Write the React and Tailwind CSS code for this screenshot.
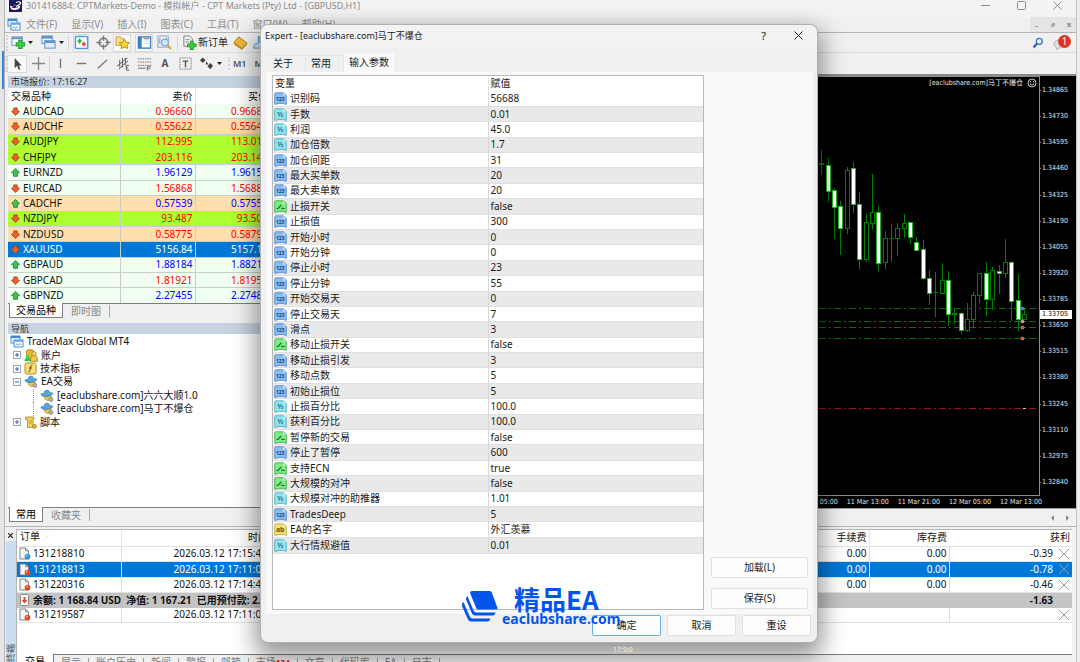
import React, { useState } from "react";
import clsx from "clsx";

const quotes = [
  ["AUDCAD", "0.96660", "0.96688", "down", "mint"],
  ["AUDCHF", "0.55622", "0.55642", "down", "peach"],
  ["AUDJPY", "112.995", "113.017", "down", "lime"],
  ["CHFJPY", "203.116", "203.145", "down", "lime"],
  ["EURNZD", "1.96129", "1.96155", "up", "mint"],
  ["EURCAD", "1.56868", "1.56887", "down", "mint"],
  ["CADCHF", "0.57539", "0.57555", "up", "peach"],
  ["NZDJPY", "93.487", "93.501", "down", "lime"],
  ["NZDUSD", "0.58775", "0.58791", "down", "peach"],
  ["XAUUSD", "5156.84", "5157.12", "down", "blue"],
  ["GBPAUD", "1.88184", "1.88213", "up", "mint"],
  ["GBPCAD", "1.81921", "1.81957", "down", "mint"],
  ["GBPNZD", "2.27455", "2.27484", "up", "mint"],
];

const rowColor = {
  mint: "bg-[#f0fff0]",
  peach: "bg-[#ffdead]",
  lime: "bg-[#adff2f]",
  blue: "bg-[#0078d7] text-white",
};

const params = [
  ["int", "识别码", "56688"],
  ["dbl", "手数", "0.01"],
  ["dbl", "利润", "45.0"],
  ["dbl", "加仓倍数", "1.7"],
  ["int", "加仓间距", "31"],
  ["int", "最大买单数", "20"],
  ["int", "最大卖单数", "20"],
  ["bool", "止损开关", "false"],
  ["int", "止损值", "300"],
  ["int", "开始小时", "0"],
  ["int", "开始分钟", "0"],
  ["int", "停止小时", "23"],
  ["int", "停止分钟", "55"],
  ["int", "开始交易天", "0"],
  ["int", "停止交易天", "7"],
  ["int", "滑点", "3"],
  ["bool", "移动止损开关", "false"],
  ["int", "移动止损引发", "3"],
  ["int", "移动点数", "5"],
  ["int", "初始止损位", "5"],
  ["dbl", "止损百分比", "100.0"],
  ["dbl", "获利百分比", "100.0"],
  ["bool", "暂停新的交易", "false"],
  ["int", "停止了暂停", "600"],
  ["bool", "支持ECN", "true"],
  ["bool", "大规模的对冲", "false"],
  ["dbl", "大规模对冲的助推器", "1.01"],
  ["int", "TradesDeep", "5"],
  ["str", "EA的名字", "外汇羡慕"],
  ["dbl", "大行情规避值", "0.01"],
];

// x, high, low, body top, body bottom, filled
const candles = [
  [2, 73, 98, 86, 87, 0],
  [9, 81, 125, 88, 114, 1],
  [15, 111, 162, 113, 130, 1],
  [21, 124, 178, 129, 151, 1],
  [28, 90, 157, 93, 151, 0],
  [34, 85, 136, 91, 127, 1],
  [40, 115, 192, 127, 182, 1],
  [47, 137, 185, 145, 182, 0],
  [53, 97, 152, 135, 146, 0],
  [59, 129, 194, 135, 186, 1],
  [66, 154, 192, 161, 185, 0],
  [72, 147, 185, 161, 161, 0],
  [78, 146, 179, 151, 161, 0],
  [85, 137, 161, 146, 151, 0],
  [91, 145, 167, 145, 160, 1],
  [97, 160, 174, 165, 173, 1],
  [104, 163, 203, 172, 201, 1],
  [110, 193, 228, 201, 216, 1],
  [116, 195, 240, 215, 215, 0],
  [123, 186, 217, 203, 216, 0],
  [129, 194, 249, 203, 237, 1],
  [135, 231, 247, 236, 237, 0],
  [142, 235, 257, 236, 253, 1],
  [148, 226, 255, 242, 253, 0],
  [154, 215, 251, 218, 242, 0],
  [160, 196, 226, 196, 218, 0],
  [167, 185, 239, 196, 222, 1],
  [173, 190, 233, 193, 222, 0],
  [180, 188, 217, 194, 196, 1],
  [186, 162, 201, 185, 196, 0],
  [192, 184, 244, 185, 224, 1],
  [199, 197, 254, 223, 242, 1],
  [205, 231, 243, 237, 242, 0],
];

const prices = [
  "1.34865", "1.34730", "1.34595", "1.34460", "1.34325", "1.34190", "1.34055", "1.33920",
  "1.33785", "1.33650", "1.33515", "1.33380", "1.33245", "1.33110", "1.32975", "1.32840",
];

const times = ["11 Mar 05:00", "11 Mar 13:00", "11 Mar 21:00", "12 Mar 05:00", "12 Mar 13:00"];

const orders = [
  ["131218810", "2026.03.12 17:15:43", "-0.39", "buy"],
  ["131218813", "2026.03.12 17:11:01", "-0.78", "sell"],
  ["131220316", "2026.03.12 17:14:41", "-0.46", "sell"],
];

/* ---------- icons ---------- */

const Arrow = ({ dir }) => (
  <svg width="9" height="9" viewBox="0 0 9 9" className="shrink-0">
    {dir === "up" ? (
      <path d="M4.500 .5 8.500 4.500 6.500 5V8.300H2.500V5L.5 4.500z" fill="#3fc255" stroke="#167d30" strokeWidth=".8" />
    ) : (
      <path d="M4.500 8.500.5 4.500 2.800 3V.9H6.200V3L8.500 4.500z" fill="#f0602f" stroke="#a83a18" strokeWidth=".8" />
    )}
  </svg>
);

const typeStyle = {
  int: ["#8dbdf0", "#4a83c4", "#123f80", "123"],
  dbl: ["#93e3ee", "#45a9ba", "#14707f", "½"],
  bool: ["#7fea86", "#35a845", "#10702a", ""],
  str: ["#f0e27c", "#b9a233", "#6a5708", "ab"],
};

const TypeIcon = ({ type }) => {
  const [fill, stroke, ink, label] = typeStyle[type];
  return (
    <svg width="13" height="13" viewBox="0 0 13 13" className="shrink-0">
      <path
        d="M1.500 .8H9.200L12.300 3.300V12.200H10.800L9.800 11.400H4L3 12.200H.7V1.600z"
        fill={fill}
        stroke={stroke}
        strokeWidth=".8"
      />
      <path d="M9 .9V3.500H12.200z" fill="#fff" fillOpacity=".6" />
      {type === "bool" ? (
        <path d="M2.500 8.500H4L7.300 4.800M8 7.500V8.500H10.800" fill="none" stroke={ink} strokeWidth="1.200" />
      ) : (
        <text
          x="6.200"
          y="8.800"
          textAnchor="middle"
          fontSize={type === "int" ? 5 : 7}
          fontWeight="700"
          fontFamily="Noto Sans"
          fill={ink}
        >
          {label}
        </text>
      )}
    </svg>
  );
};

const DocIcon = ({ color }) => (
  <svg width="12" height="13" viewBox="0 0 12 13" className="shrink-0">
    <path d="M1 1H6.500L9.500 3.800V12H1z" fill="#f7f7f7" stroke="#777" strokeWidth=".9" />
    <path d="M6.500 1V3.800H9.500" fill="none" stroke="#777" strokeWidth=".8" />
    <circle cx="8.500" cy="9.600" r="2.900" fill={color} />
    <circle cx="7.800" cy="8.700" r="1" fill="#fff" fillOpacity=".5" />
  </svg>
);

const WindowsIcon = () => (
  <svg width="14" height="13" viewBox="0 0 14 13" className="shrink-0">
    <rect x="1" y="1" width="9" height="7" fill="#e9f4ff" stroke="#4a90d0" />
    <path d="M1 2H10" stroke="#3a86cf" strokeWidth="2" />
    <rect x="4" y="5" width="9" height="7" fill="#fff" stroke="#4a90d0" />
    <path d="M4 6H13" stroke="#5aa2e2" strokeWidth="1.500" />
    <path d="M5.500 10.500 7 8.500 8.500 10.500 10 8.500 11.500 10" fill="none" stroke="#4a90d0" strokeWidth=".8" />
  </svg>
);

const HatIcon = () => (
  <svg width="14" height="13" viewBox="0 0 14 13" className="shrink-0">
    <path d="M4 7Q4.500 11.500 8 11.500T11.500 7z" fill="#e8c25a" stroke="#b08a26" strokeWidth=".6" />
    <path d="M.8 5.500Q2 7.800 7 7.300T13 4.300Q11.500 3.300 10 3.800 8.800.3 6 1.200 4 2 4 4.700 1.500 4.300.8 5.500z" fill="#55a7dc" stroke="#2d78ad" strokeWidth=".7" />
    <circle cx="11" cy="10.500" r="1.900" fill="#b6b6b6" stroke="#777" strokeWidth=".7" />
  </svg>
);

const UsersIcon = () => (
  <svg width="14" height="13" viewBox="0 0 14 13" className="shrink-0">
    <rect x="2.500" y=".8" width="7" height="9" rx="1.500" fill="#e7b92c" stroke="#9d7508" strokeWidth=".7" />
    <path d="M6.500 12.300Q6 6.500 10 6.500T13.500 12.300z" fill="#f0ca45" stroke="#9d7508" strokeWidth=".7" />
    <circle cx="10" cy="4.800" r="2.200" fill="#f3d470" stroke="#9d7508" strokeWidth=".7" />
    <path d="M.4 12.300Q.4 8.500 3.500 8.500T6.700 12.300z" fill="#41c148" />
    <circle cx="3.500" cy="7.300" r="1.900" fill="#59d25f" />
  </svg>
);

const FuncIcon = () => (
  <svg width="13" height="13" viewBox="0 0 13 13" className="shrink-0">
    <rect x="1" y="1" width="11" height="11" rx="1.500" fill="#f8df78" stroke="#b08e22" />
    <path d="M8.500 3.300Q6.800 2.800 6.500 5L5.800 9Q5.500 10 4.300 9.700M4.800 6H8" fill="none" stroke="#6e5409" />
  </svg>
);

const ScriptIcon = () => (
  <svg width="13" height="13" viewBox="0 0 13 13" className="shrink-0">
    <path d="M1.500 1H10V3.500H9V9H11.500V11.500H3.500V3.500H1.500z" fill="#f1d262" stroke="#a98920" strokeWidth=".8" />
    <path d="M5 5H8M5 7H8" stroke="#a98920" strokeWidth=".8" />
    <circle cx="10.500" cy="10.500" r="1.900" fill="#e4b832" stroke="#8b6a10" strokeWidth=".6" />
  </svg>
);

const Toggle = ({ open }) => (
  <svg width="8" height="8" viewBox="0 0 8 8" className="shrink-0">
    <rect x=".5" y=".5" width="7" height="7" fill="#fff" stroke="#a5a5a5" />
    <path d={open ? "M2 4H6" : "M2 4H6M4 2V6"} stroke="#3a5da8" />
  </svg>
);

const Caret = () => (
  <svg width="5" height="3" viewBox="0 0 5 3" className="shrink-0">
    <path d="M0 0H5L2.500 3z" fill="#222" />
  </svg>
);

const Grip = () => <span className="h-4 w-0 border-l-2 border-dotted border-gray-300" />;

const Tool = ({ label, active, className, children }) => (
  <button
    aria-label={label}
    className={clsx("flex h-[18px] items-center justify-center", active && "border border-[#dadada] bg-[#f9f9f9]", className)}
  >
    {children}
  </button>
);

const Svg16 = ({ children }) => (
  <svg width="15" height="15" viewBox="0 0 16 16" fill="none" className="shrink-0">
    {children}
  </svg>
);

/* ---------- main window bars ---------- */

const TitleBar = () => (
  <div className="flex h-[17px] items-center bg-[#f3f3f3] pb-[6px] pl-1 text-[9px] text-[#8b8b8b]">
    <svg width="13" height="12" viewBox="0 0 13 12" className="mr-1 shrink-0">
      <path d="M0 0H13V12H0z" fill="#1b1a5e" />
      <path d="M7 2.500Q10.500 1 11.500 2.500T7 6.500" fill="none" stroke="#fff" strokeWidth="1.200" />
      <path d="M2 6Q2 9.500 6 9T10.500 6" fill="none" stroke="#fff" strokeWidth="1.800" />
      <path d="M2.500 7.500 7 4.500" stroke="#d9485b" />
    </svg>
    <span className="flex-1">301416884: CPTMarkets-Demo - 模拟帐户 - CPT Markets (Pty) Ltd - [GBPUSD,H1]</span>
    <div className="flex gap-[27px] pr-[14px]">
      <button aria-label="最小化">
        <svg width="9" height="9" viewBox="0 0 9 9"><path d="M0 4.500H9" stroke="#8d8d8d" /></svg>
      </button>
      <button aria-label="最大化">
        <svg width="9" height="9" viewBox="0 0 9 9"><rect x=".5" y=".5" width="8" height="8" rx="1" fill="none" stroke="#8d8d8d" /></svg>
      </button>
      <button aria-label="关闭">
        <svg width="9" height="9" viewBox="0 0 9 9"><path d="M.5.5 8.500 8.500M8.500.5.5 8.500" stroke="#8d8d8d" /></svg>
      </button>
    </div>
  </div>
);

const MenuBar = () => (
  <div className="flex h-4 items-center border-b border-[#b5b5b5] bg-[#f0f0f0] pl-[2px] text-[#8f8f8f]">
    <WindowsIcon />
    <nav className="flex flex-1 gap-[14px] pl-[5px]">
      {["文件(F)", "显示(V)", "插入(I)", "图表(C)", "工具(T)", "窗口(W)", "帮助(H)"].map((m) => (
        <button key={m}>{m}</button>
      ))}
    </nav>
    <div className="flex h-full items-center gap-3 bg-[#e5e5e5] px-[5px]">
      <svg width="4" height="4" viewBox="0 0 4 4"><path d="M0 3.500H3" stroke="#8fa0b0" /></svg>
      <svg width="4" height="4" viewBox="0 0 4 4"><path d="M.5 1.500H2.500V3.500H.5zM1.500 .5H3.500V2.500" fill="none" stroke="#8fa0b0" /></svg>
      <svg width="4" height="4" viewBox="0 0 4 4"><path d="M0 0 4 4M4 0 0 4" stroke="#7f8f9f" strokeWidth="1.500" /></svg>
    </div>
  </div>
);

const Toolbars = () => (
  <div className="relative h-[41px] bg-[#f0f0f0] text-[#222]">
    <div className="flex h-5 items-center border-b border-[#dcdcdc] pl-[1px]">
      <Grip />
      <Tool label="新图表" className="w-5">
        <Svg16>
          <rect x="1" y="2" width="11" height="9" fill="#fff" stroke="#5b8fc4" />
          <path d="M1 3.500H12" stroke="#5b8fc4" strokeWidth="2" />
          <path d="M10 5V15M5 10H15" stroke="#1f9a2a" strokeWidth="4.500" />
          <path d="M10 6V14M6 10H14" stroke="#3fd14a" strokeWidth="2.500" />
        </Svg16>
      </Tool>
      <Caret />
      <Tool label="模板" className="ml-1 w-[22px]">
        <Svg16>
          <rect x="1" y="1" width="11" height="8" fill="#eaf4ff" stroke="#5b8fc4" />
          <path d="M1 2.500H12" stroke="#5b8fc4" strokeWidth="2.500" />
          <rect x="4" y="6" width="11" height="8" fill="#dfeefc" stroke="#5b8fc4" />
          <path d="M4 7.500H15" stroke="#5b8fc4" strokeWidth="2" />
        </Svg16>
      </Tool>
      <Caret />
      <span className="mx-1 h-4 border-l border-gray-300" />
      <Tool label="市场报价" active className="w-4">
        <Svg16>
          <rect x="1.500" y="1.500" width="13" height="13" rx="1" fill="#fff" stroke="#4d9be0" strokeWidth="1.600" />
          <path d="M6 3.500 8.500 6.500 6 9.500 3.500 6.500z" fill="#38b048" />
          <path d="M10.500 7 13 9.500 10.500 12.500 8 9.500z" fill="#e5532d" />
        </Svg16>
      </Tool>
      <Tool label="数据窗口" className="ml-1 w-5">
        <Svg16>
          <circle cx="8" cy="8" r="4.500" stroke="#777" strokeWidth="1.700" />
          <path d="M8 .5V6M8 10V15.500M.5 8H6M10 8H15.500" stroke="#777" strokeWidth="1.500" />
        </Svg16>
      </Tool>
      <Tool label="导航" active className="w-[18px]">
        <Svg16>
          <path d="M1 2H6L7 4H10V11H1z" fill="#fbe08a" stroke="#c99a25" />
          <path d="m10 4.500 1.700 3.300 3.800.5-2.700 2.500.6 3.700-3.400-1.700-3.400 1.700.6-3.700L4.500 8.300l3.800-.5z" fill="#ffd53a" stroke="#b98a10" />
        </Svg16>
      </Tool>
      <Tool label="终端" active className="ml-1 w-[18px]">
        <Svg16>
          <rect x="1.500" y="2" width="13" height="12" fill="#fff" stroke="#3d7fc4" strokeWidth="1.500" />
          <path d="M2 2H5V14H2z" fill="#3d7fc4" />
          <path d="M7 4H13" stroke="#d0452c" />
          <path d="M7 6.500H13M7 9H13" stroke="#c6dff5" />
        </Svg16>
      </Tool>
      <Tool label="策略测试" className="ml-[2px] w-[18px]">
        <Svg16>
          <rect x="1" y="1" width="11" height="12" fill="#e6eef6" stroke="#8aa5bf" />
          <path d="M3 3V9M5.500 5V11M10 3V8" stroke="#6d8eb0" />
          <circle cx="8.500" cy="8" r="3.700" fill="#cfe6fa" stroke="#6b93b8" />
          <path d="M11 11 15 15" stroke="#e0a52c" strokeWidth="2.200" />
        </Svg16>
      </Tool>
      <span className="mx-1 h-4 border-l border-gray-300" />
      <button className="flex items-center gap-px">
        <Svg16>
          <path d="M2 1H8L11 4V12H2z" fill="#f4f4f4" stroke="#777" />
          <path d="M4 5H8M4 7.500H7" stroke="#777" />
          <path d="M10.500 6V16M5.500 11H15.500" stroke="#1f9a2a" strokeWidth="4" />
          <path d="M10.500 7V15M6.500 11H14.500" stroke="#3fd14a" strokeWidth="2" />
        </Svg16>
        新订单
      </button>
      <Tool label="编辑器" className="ml-1 w-4">
        <Svg16>
          <path d="M6 2 15 8.500 9.500 14.500 1 8z" fill="#eab73a" stroke="#a87711" />
          <path d="M1 8 9.500 14.500 15 8.500V10L9.500 16 1 10z" fill="#c98f1d" />
        </Svg16>
      </Tool>
      <Tool label="自动交易" className="ml-1 w-4">
        <Svg16>
          <path d="M5 1H12V8H5z" fill="#56aee8" />
          <path d="M1 14Q0 9 5 9.500 8 6 11 9.500 16 9 15 14z" fill="#cfe7fa" stroke="#5593c9" />
        </Svg16>
      </Tool>
    </div>
    <div className="flex h-[21px] items-center text-[9px] font-semibold text-[#555]">
      <Grip />
      <Tool label="光标" active className="w-5">
        <Svg16><path d="M5 2V13L7.500 10.500 9.500 15 11 14 9.500 10H12.500z" fill="#444" /></Svg16>
      </Tool>
      <Tool label="十字线" className="ml-px w-5"><Svg16><path d="M8 1V15M1 8H15" stroke="#888" strokeWidth="1.500" /></Svg16></Tool>
      <span className="ml-px h-4 border-l border-gray-300" />
      <Tool label="垂直线" className="w-[21px]"><Svg16><path d="M8 3V13" stroke="#777" strokeWidth="1.500" /></Svg16></Tool>
      <Tool label="水平线" className="w-[21px]"><Svg16><path d="M3 8H13" stroke="#777" strokeWidth="1.500" /></Svg16></Tool>
      <Tool label="趋势线" className="w-[21px]"><Svg16><path d="M3 13 13 4" stroke="#777" strokeWidth="1.300" /></Svg16></Tool>
      <Tool label="通道" className="w-[21px]">
        <Svg16><path d="M1 11 12 2M3 14 13 5M4 4V12M7 2V12M10 2V10M14 10H11V15H14M11 12.500H13" stroke="#555" /></Svg16>
      </Tool>
      <Tool label="斐波那契" className="w-[21px]">
        <Svg16>
          <path d="M1 3H15M1 6.500H15M1 10H15" stroke="#666" strokeDasharray="1.500 1" />
          <path d="M1 13H9M11 15.500V11.500H15M11 13.500H14" stroke="#666" />
        </Svg16>
      </Tool>
      <Tool label="文字" className="w-5 text-[10px] font-bold">A</Tool>
      <Tool label="文本标签" className="w-[21px]">
        <Svg16>
          <rect x="2" y="2" width="12" height="12" stroke="#777" strokeDasharray="1.500 1" />
          <path d="M5 5.500H11M8 5.500V12" stroke="#555" strokeWidth="1.500" />
        </Svg16>
      </Tool>
      <Tool label="箭头" className="w-[21px]">
        <Svg16><path d="M4 1.500 7 4.500 4 7.500 1 4.500zM8 5.500 10 9H7zM12 7.500 15 10.500 12 14 9 11z" fill="#444" /></Svg16>
      </Tool>
      <Caret />
      <span className="ml-[6px]"><Grip /></span>
      <button className="ml-[3px]">M1</button>
      <button className="ml-2">M5</button>
      <button className="ml-2">M15</button>
    </div>
    {/* search and notifications */}
    <div className="absolute right-[5px] top-0 flex items-start gap-[9px]">
      <button aria-label="搜索" className="mt-1">
        <svg width="12" height="12" viewBox="0 0 12 12">
          <circle cx="7.300" cy="4.300" r="3" fill="#e4f0ff" stroke="#3f6fc9" strokeWidth="1.300" />
          <path d="M5 6.500 1.500 10.500" stroke="#2f5dbb" strokeWidth="2.200" />
        </svg>
      </button>
      <button aria-label="通知" className="mt-[2px] flex items-start">
        <svg width="8" height="11" viewBox="0 0 8 11" className="mt-1">
          <path d="M8 1Q1 1 1 5 1 7.500 3.500 8.500V10.500L6 9H8z" fill="#e2e2e2" stroke="#b5b5b5" />
        </svg>
        <span className="-ml-[3px] flex size-[13px] items-center justify-center rounded-full bg-[#dc3520] text-[10px] leading-[13px] text-white">1</span>
      </button>
    </div>
  </div>
);

/* ---------- left panels ---------- */

const PanelTabs = ({ tabs }) => (
  <div className="flex h-[19px] shrink-0 items-start border-t border-[#7d7d7d] pl-px text-[#8a8a8a]">
    {tabs.map((t, i) =>
      i === 0 ? (
        <button key={t} className="-mt-px h-[15px] border-x border-b border-[#7d7d7d] bg-white px-[6px] leading-[13px] text-black">{t}</button>
      ) : (
        <button key={t} className="mt-px border-r border-[#a5a5a5] px-2 leading-[12px]">{t}</button>
      )
    )}
  </div>
);

const MarketWatch = () => (
  <>
    <div className="h-3 bg-[#c5d3e2] pl-[3px] text-[9px] leading-[11px] text-[#333]">市场报价: 17:16:27</div>
    <div className="h-[215px] shrink-0 overflow-hidden bg-white">
      <table className="h-[216px] w-full table-fixed border-collapse leading-[13px]">
        <colgroup>
          <col className="w-[112px]" />
          <col className="w-[75px]" />
          <col />
        </colgroup>
        <thead>
          <tr className="h-4">
            <th className="border-r border-[#e5e5e5] p-0 pl-[3px] text-left font-normal">交易品种</th>
            <th className="border-r border-[#e5e5e5] p-0 pr-[2px] text-right font-normal">卖价</th>
            <th className="p-0 pr-[2px] text-right font-normal">买价</th>
          </tr>
        </thead>
        <tbody>
          {quotes.map(([sym, bid, ask, dir, bg]) => {
            const color = bg === "blue" ? "text-white" : dir === "up" ? "text-[#0000ff]" : "text-[#ff0000]";
            return (
              <tr key={sym} className={rowColor[bg]}>
                <td className="border-b border-r border-[#c8cfc8] p-0">
                  <span className="flex items-center gap-[3px] pl-[3px]">
                    <Arrow dir={dir} />
                    {sym}
                  </span>
                </td>
                <td className={clsx("border-b border-r border-[#c8cfc8] p-0 pr-[2px] text-right", color)}>{bid}</td>
                <td className={clsx("border-b border-[#c8cfc8] p-0 pr-[2px] text-right", color)}>{ask}</td>
              </tr>
            );
          })}
        </tbody>
      </table>
    </div>
    <PanelTabs tabs={["交易品种", "即时图"]} />
  </>
);

const Navigator = () => (
  <>
    <div className="mt-px h-[11px] bg-[#c5d3e2] pl-[3px] text-[9px] leading-[11px] text-[#333]">导航</div>
    <div className="flex-1 bg-white pt-px">
      <ul className="flex h-[94px] flex-col *:flex *:flex-1 *:items-center *:gap-[3px] *:leading-[13px]">
        <li className="pl-[2px]"><WindowsIcon />TradeMax Global MT4</li>
        <li className="pl-[5px]"><Toggle /><UsersIcon />账户</li>
        <li className="pl-[5px]"><Toggle /><FuncIcon />技术指标</li>
        <li className="pl-[5px]"><Toggle open /><HatIcon />EA交易</li>
        {["[eaclubshare.com]六六大顺1.0", "[eaclubshare.com]马丁不爆仓"].map((n) => (
          <li key={n} className="pl-[25px]">
            <span className="-mr-1 h-full w-2 border-l border-dotted border-gray-400" />
            <HatIcon />
            {n}
          </li>
        ))}
        <li className="pl-[5px]"><Toggle /><ScriptIcon />脚本</li>
      </ul>
    </div>
    <PanelTabs tabs={["常用", "收藏夹"]} />
  </>
);

/* ---------- chart ---------- */

const Chart = () => (
  <div className="flex min-w-0 flex-1 flex-col">
    <div className="flex flex-1 flex-col border-t-2 border-[#8a8a8a] bg-black font-['DejaVu_Sans_Condensed','Noto_Sans_CJK_SC',sans-serif] text-[7px] leading-[9px] text-[#e6e6e6]">
      <div className="flex h-[420px]">
        <div className="relative flex flex-1 justify-end overflow-hidden border-b border-r border-t border-[#8e8e8e]">
          <svg width="220" height="418" viewBox="0 0 220 418" className="shrink-0" shapeRendering="crispEdges">
            {[231, 244, 250, 261].map((y) => (
              <path key={y} d={`M0 ${y}.5H220`} stroke="#0b6b12" strokeDasharray="7 3 2 3" />
            ))}
            <path d="M0 331.500H220" stroke="#a80f0f" strokeDasharray="7 3 2 3" />
            <path d="M204 331.500H207" stroke="#ccc" />
            {candles.map(([x, high, low, top, bottom, filled]) => (
              <g key={x}>
                <path d={`M${x + 0.5} ${high}V${low}`} stroke="#008000" />
                <rect
                  x={x - 1.5}
                  y={top + 0.5}
                  width="4"
                  height={Math.max(bottom - top, 0.1)}
                  fill={filled ? "#fff" : "#000"}
                  stroke={filled ? "#22b522" : "#008000"}
                />
              </g>
            ))}
            {[[231, "#3b4bff"], [244, "#d99"], [250, "#f22"], [261, "#f22"]].map(([y, c]) => (
              <circle key={y} cx="203.500" cy={y + 0.5} r="1.500" fill={c} stroke="#ccc" strokeWidth=".6" shapeRendering="auto" />
            ))}
          </svg>
          <div className="absolute right-[2px] top-px flex items-center gap-1">
            [eaclubshare.com]马丁不爆仓
            <svg width="10" height="10" viewBox="0 0 10 10" fill="none" stroke="#ddd" strokeWidth=".9">
              <circle cx="5" cy="5" r="4" />
              <path d="M2.800 5.800Q5 8.500 7.200 5.800M3.500 3V4.300M6.500 3V4.300" />
            </svg>
          </div>
        </div>
        <div className="relative flex w-9 flex-col justify-between pb-[9px] pt-[10px]">
          {prices.map((p) => (
            <span key={p} className="flex items-center gap-px">
              <i className="w-px border-t border-[#8e8e8e]" />
              {p}
            </span>
          ))}
          <span className="absolute left-0 top-[234px] w-8 bg-white pl-[2px] text-black">1.33705</span>
        </div>
      </div>
      <div className="flex justify-end gap-[9px] pr-[34px] pt-[2px]">
        {times.map((t) => (
          <span key={t} className="whitespace-nowrap">{t}</span>
        ))}
      </div>
    </div>
    <div className="flex h-[18px] items-center justify-end gap-3 border-t border-[#9a9a9a] pr-[7px]">
      <svg width="3" height="6" viewBox="0 0 3 6"><path d="M3 0V6L0 3z" fill="#8a8a8a" /></svg>
      <svg width="3" height="6" viewBox="0 0 3 6"><path d="M0 0V6L3 3z" fill="#8a8a8a" /></svg>
    </div>
  </div>
);

/* ---------- terminal ---------- */

const CloseOrder = () => (
  <button aria-label="平仓" className="block">
    <svg width="12" height="12" viewBox="0 0 12 12"><path d="M1 1 11 11M11 1 1 11" stroke="#999" /></svg>
  </button>
);

const OrderRow = ({ id, time, profit, kind, selected, pending }) => (
  <tr className={clsx("border-b border-[#e2e2e2]", selected && "bg-[#0078d7] text-white")}>
    <td className="border-r border-[#dcdcdc] p-0">
      <span className="flex items-center gap-[2px] pl-[2px]">
        <DocIcon color={kind === "buy" ? "#2b94dd" : "#dd4a22"} />
        {id}
      </span>
    </td>
    <td className="p-0 pr-px text-right">{time}</td>
    <td />
    <td className={clsx("p-0 pr-[2px] text-right", !pending && "border-r border-[#dcdcdc]")}>{!pending && "0.00"}</td>
    <td className="border-r border-[#dcdcdc] p-0 pr-[2px] text-right">{!pending && "0.00"}</td>
    <td className="p-0">
      <span className="flex items-center justify-end gap-[5px] pr-[2px]">
        {profit}
        <CloseOrder />
      </span>
    </td>
  </tr>
);

const bottomTabs = ["展示", "账户历史", "新闻", "警报", "邮箱", "市场", "文章", "代码库", "EA", "日志"];

const Terminal = () => (
  <div className="flex h-[136px] shrink-0 border-t border-[#b5b5b5] bg-[#f0f0f0] pr-1 pt-[2px]">
    <div className="flex w-[11px] shrink-0 flex-col items-center">
      <button aria-label="关闭终端" className="flex h-3 items-center">
        <svg width="5" height="5" viewBox="0 0 5 5"><path d="M0 0 5 5M5 0 0 5" stroke="#222" strokeWidth="1.200" /></svg>
      </button>
      <div className="flex w-[10px] flex-1 items-end justify-center bg-[#c9dcf0]">
        <span className="rotate-180 text-[9px] leading-[10px] text-[#555] [text-orientation:sideways] [writing-mode:vertical-rl]">终端</span>
      </div>
    </div>
    <div className="flex min-w-0 flex-1 flex-col border-l border-t border-[#b5b5b5] bg-white">
      <table className="h-[93px] w-full table-fixed border-collapse leading-[13px]">
        <colgroup>
          <col className="w-[104px]" />
          <col className="w-[147px]" />
          <col />
          <col className="w-20" />
          <col className="w-20" />
          <col className="w-[123px]" />
        </colgroup>
        <thead>
          <tr className="h-4 border-b border-[#e2e2e2] *:p-0 *:font-normal">
            <th className="border-r border-[#e8e8e8] text-left"><span className="pl-[3px]">订单</span> <span className="text-[6px] text-gray-400">∕</span></th>
            <th className="text-right">时间</th>
            <th />
            <th className="border-r border-[#e8e8e8] text-right"><span className="pr-[2px]">手续费</span></th>
            <th className="text-right"><span className="pr-[2px]">库存费</span></th>
            <th className="text-right"><span className="pr-[2px]">获利</span></th>
          </tr>
        </thead>
        <tbody>
          {orders.map(([id, time, profit, kind], i) => (
            <OrderRow key={id} id={id} time={time} profit={profit} kind={kind} selected={i === 1} />
          ))}
          <tr className="bg-[#c4c4c4] font-bold">
            <td colSpan={5} className="whitespace-pre p-0">
              <span className="flex items-center gap-[2px] pl-[2px]">
                <svg width="12" height="12" viewBox="0 0 12 12" className="shrink-0">
                  <rect x="1.500" y=".5" width="8" height="11" rx="1" fill="#fff" stroke="#888" />
                  <path d="M5.500 9.500 2.500 6H4.500V3H6.500V6H8.500z" fill="#dd4a22" />
                </svg>
                {"余额: 1 168.84 USD  净值: 1 167.21  已用预付款: 2.63"}
              </span>
            </td>
            <td className="p-0 pr-[19px] text-right">-1.63</td>
          </tr>
          <OrderRow id="131219587" time="2026.03.12 17:11:02" kind="sell" pending />
        </tbody>
      </table>
      <div className="flex-1" />
      <div className="flex h-2 shrink-0 items-start border-t border-[#7d7d7d] bg-[#f0f0f0] leading-[14px] text-[#7d7d7d]">
        <button className="-mt-px border-r border-[#7d7d7d] bg-white px-2 text-black">交易</button>
        {bottomTabs.map((t) => (
          <button key={t} className="flex shrink-0 items-center">
            <span className="px-[7px]">
              {t}
              {t === "市场" && <b className="text-[8px] text-[#f00000]">134</b>}
            </span>
            <i className="h-[9px] border-l border-[#9a9a9a]" />
          </button>
        ))}
      </div>
    </div>
  </div>
);

/* ---------- expert dialog ---------- */

const DialogButton = ({ primary, className, children }) => (
  <button
    className={clsx(
      "h-[21px] rounded-[2px] border bg-[#fdfdfd] text-center leading-[18px]",
      primary ? "border-[#6cb0e6]" : "border-[#e0e0e0]",
      className
    )}
  >
    {children}
  </button>
);

const ExpertDialog = () => {
  const [tab, setTab] = useState("输入参数");

  return (
    <div
      role="dialog"
      aria-label="Expert"
      className="relative w-[558px] rounded-lg border border-[#b0b0b0] bg-[#f0f0f0] text-[#1a1a1a] shadow-[0_10px_24px_4px_rgba(0,0,0,0.42)]"
    >
      <div className="flex h-[22px] items-center justify-between rounded-t-lg bg-[#f3f3f3] pl-1 pr-[14px]">
        <span className="text-[9px]">Expert - [eaclubshare.com]马丁不爆仓</span>
        <span className="flex items-center gap-7">
          <button aria-label="帮助" className="text-[11px]">?</button>
          <button aria-label="关闭">
            <svg width="9" height="9" viewBox="0 0 9 9"><path d="M.5.5 8.500 8.500M8.500.5.5 8.500" stroke="#222" /></svg>
          </button>
        </span>
      </div>

      <div className="flex items-end pl-[7px] pt-[6px]">
        {["关于", "常用", "输入参数"].map((t) => (
          <button
            key={t}
            onClick={() => setTab(t)}
            className={clsx(
              t === tab ? "h-[19px] bg-[#f9f9f9] px-[5px]" : "h-[17px] border-r border-t border-[#e6e6e6] pl-[5px] pr-3"
            )}
          >
            {t}
          </button>
        ))}
      </div>

      <div className="ml-[5px] mr-1 flex gap-[7px] bg-[#f9f9f9] py-1 pl-[6px] pr-[5px] pt-[3px]">
        <div className="h-[535px] flex-1 border border-[#b9b9b9] bg-white">
          <table className="h-[478px] w-full table-fixed border-collapse leading-[13px]">
            <colgroup>
              <col className="w-1/2" />
              <col />
            </colgroup>
            <thead>
              <tr className="h-4">
                <th className="border-r border-[#e4e4e4] p-0 pl-[2px] text-left font-normal">变量</th>
                <th className="p-0 pl-[2px] text-left font-normal">赋值</th>
              </tr>
            </thead>
            <tbody>
              {params.map(([type, name, value]) => (
                <tr key={name} className="border-b border-[#e0e0e0] even:bg-[#e9e9e9]">
                  <td className="border-r border-[#d8d8d8] p-0">
                    <span className="flex items-center gap-[3px] pl-px">
                      <TypeIcon type={type} />
                      {name}
                    </span>
                  </td>
                  <td className="p-0 pl-[2px]">{value}</td>
                </tr>
              ))}
            </tbody>
          </table>
        </div>
        <div className="flex w-[97px] flex-col justify-end gap-[10px] pb-px">
          <DialogButton>加载(L)</DialogButton>
          <DialogButton>保存(S)</DialogButton>
        </div>
      </div>

      <div className="flex justify-end gap-[6px] pb-[6px] pr-[6px] pt-px">
        <DialogButton primary className="w-[69px]">确定</DialogButton>
        <DialogButton className="w-[69px]">取消</DialogButton>
        <DialogButton className="w-[69px]">重设</DialogButton>
      </div>

      {/* brand stamp */}
      <div className="pointer-events-none absolute bottom-4 left-[200px] flex items-center gap-1 text-[#0655ea]">
        <svg width="37" height="32" viewBox="0 0 37 32" fill="currentColor">
          <path d="M11 1H28.500Q30 1 30.700 2.300L36.500 18Q36.800 19.500 35 19.500H17.500Q16 19.500 15.300 18.200L9 3Q9 1 11 1z" />
          <path d="M6.500 6 12.500 20.500Q13.500 22.500 15.500 22.500H34.500Q34 25.500 31.500 25.500H14Q12 25.500 11 23.500L5 9.500Q4.500 7 6.500 6z" />
          <path d="M2.500 12 8.500 26Q9.500 28.500 11.500 28.500H29.500Q28.500 31.500 26.500 31.500H10Q8 31.500 7 29.500L1 16Q.5 13 2.500 12z" />
        </svg>
        <div className="font-['Noto_Sans_CJK_SC',sans-serif] font-bold">
          <div className="pl-3 text-[26px] leading-[26px]">精品EA</div>
          <div className="font-['Noto_Sans',sans-serif] text-[14px] leading-[14px]">eaclubshare.com</div>
        </div>
      </div>
    </div>
  );
};

const App = () => {
  return (
    <div className="relative flex h-screen overflow-hidden bg-[#e6e6e6] font-['Noto_Sans','Noto_Sans_CJK_SC',sans-serif] text-[10px] leading-[13px] text-[#111]">
      {/* edge of the window behind */}
      <div className="w-[5px] shrink-0 border-r border-[#b5b5b5] pt-[51px]">
        <div className="ml-[2px] h-[38px] bg-[#2f86dc]" />
      </div>

      <div className="flex min-w-0 flex-1 flex-col bg-[#f0f0f0]">
        <TitleBar />
        <MenuBar />
        <Toolbars />
        <div className="flex min-h-0 flex-1 pl-[3px]">
          <div className="flex w-[262px] shrink-0 flex-col pt-[2px]">
            <MarketWatch />
            <Navigator />
          </div>
          <Chart />
        </div>
        <Terminal />
      </div>
      <div className="w-1 shrink-0 border-l border-[#c4c4c4] bg-[#ededed]" />

      <div className="absolute inset-0 flex items-center justify-center pr-[2px] pt-[4px]">
        <ExpertDialog />
      </div>
      <span className="absolute bottom-2 left-[613px] text-[7px] leading-[8px] text-white/80">17:9:0</span>
    </div>
  );
};

export default App;
